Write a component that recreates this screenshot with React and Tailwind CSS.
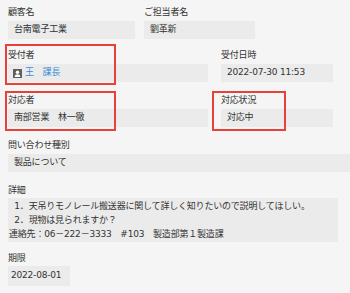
import React from "react";

function UserIcon() {
  return (
    <svg width="9" height="9" viewBox="0 0 9 9" className="shrink-0">
      <rect x="0" y="0" width="9" height="9" fill="#5f5f5f" />
      <circle cx="4.5" cy="3.3" r="1.7" fill="#ffffff" />
      <path d="M1.6 8 C1.8 6 3 5.3 4.5 5.3 C6 5.3 7.2 6 7.4 8 Z" fill="#ffffff" />
    </svg>
  );
}

function Label({ children }) {
  return <div className="h-[12px] leading-[12px] whitespace-nowrap">{children}</div>;
}

function Box({ children, className = "" }) {
  return (
    <div className={"mt-[3px] h-[18px] flex items-center bg-[#ebebeb] whitespace-pre " + className}>
      {children}
    </div>
  );
}

export default function App() {
  return (
    <div className="w-[350px] h-[293px] overflow-hidden bg-[#f5f5f5] text-[#333333] text-[9px] tracking-[-0.2px] font-['DejaVu_Sans','Noto_Sans_CJK_JP',sans-serif] pl-[8px] pt-[6px]">
      {/* Row 1 */}
      <div className="flex gap-[9px]">
        <div className="w-[127px]">
          <Label>顧客名</Label>
          <Box className="px-[6px]">台南電子工業</Box>
        </div>
        <div className="w-[111px]">
          <Label>ご担当者名</Label>
          <Box className="px-[6px]">劉革新</Box>
        </div>
      </div>

      {/* Row 2 */}
      <div className="mt-[10px] flex gap-[13px]">
        <div className="relative w-[200px]">
          <Label>受付者</Label>
          <Box className="px-[5px] gap-[3px] text-[#3a8bd6]">
            <UserIcon />
            <span>王　課長</span>
          </Box>
          <div className="absolute left-[-3px] top-[-5px] w-[111px] h-[41px] border-2 border-[#e8413a]" />
        </div>
        <div className="w-[112px]">
          <Label>受付日時</Label>
          <Box className="px-[6px]">2022-07-30 11:53</Box>
        </div>
      </div>

      {/* Row 3 */}
      <div className="mt-[12px] flex gap-[13px]">
        <div className="relative w-[200px]">
          <Label>対応者</Label>
          <Box className="px-[6px]">南部営業　林一徹</Box>
          <div className="absolute left-[-3px] top-[-3px] w-[111px] h-[40px] border-2 border-[#e8413a]" />
        </div>
        <div className="relative w-[112px]">
          <Label>対応状況</Label>
          <Box className="px-[6px]">対応中</Box>
          <div className="absolute left-[-9px] top-[-3px] w-[74px] h-[40px] border-2 border-[#e8413a]" />
        </div>
      </div>

      {/* Row 4 */}
      <div className="mt-[12px] w-[342px]">
        <Label>問い合わせ種別</Label>
        <Box className="px-[6px]">製品について</Box>
      </div>

      {/* Row 5 */}
      <div className="mt-[12px] w-[330px]">
        <Label>詳細</Label>
        <div className="mt-[2px] bg-[#ebebeb] pl-[1px] py-[1px] leading-[14px] whitespace-pre">
          <div>{"  1．天吊りモノレール搬送器に関して詳しく知りたいので説明してほしい。"}</div>
          <div>{"  2．現物は見られますか？"}</div>
          <div>{"連絡先：06－222－3333　#103　製造部第１製造課"}</div>
        </div>
      </div>

      {/* Row 6 */}
      <div className="mt-[10px]">
        <Label>期限</Label>
        <div className="mt-[2px] w-[62px] h-[20px] flex items-center pl-[3px] bg-[#ebebeb]">2022-08-01</div>
      </div>
    </div>
  );
}
